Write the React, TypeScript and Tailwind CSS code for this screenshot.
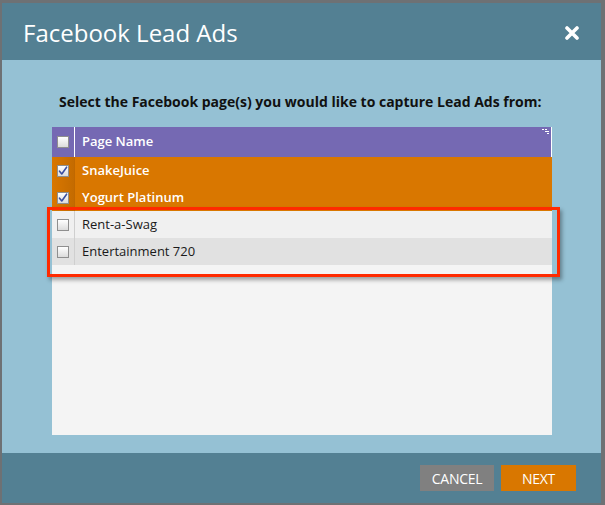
import React from "react";

function Checkbox({ checked }: { checked?: boolean }) {
  return (
    <div className="w-[12px] h-[12px] border border-[#8f8f8f] bg-gradient-to-b from-[#ffffff] to-[#dcdcdc] flex items-center justify-center">
      {checked && (
        <svg width="10" height="10" viewBox="0 0 10 10">
          <path d="M1.5 5.2 L3.8 8 L8.6 1.2" stroke="#3b4fa0" strokeWidth="1.6" fill="none" strokeLinecap="round" strokeLinejoin="round" />
        </svg>
      )}
    </div>
  );
}

type Row = { name: string; checked: boolean; kind: "sel" | "a" | "b" };

const rows: Row[] = [
  { name: "SnakeJuice", checked: true, kind: "sel" },
  { name: "Yogurt Platinum", checked: true, kind: "sel" },
  { name: "Rent-a-Swag", checked: false, kind: "a" },
  { name: "Entertainment 720", checked: false, kind: "b" },
];

export default function App() {
  return (
    <div
      className="w-[605px] h-[505px] bg-[#6e7174] overflow-hidden pt-[3px] pl-[2px]"
      style={{ fontFamily: '"Open Sans", "Noto Sans", sans-serif' }}
    >
      <div className="w-[599px] h-[500px] flex flex-col">
        {/* Header */}
        <div className="h-[57px] bg-[#538093] flex items-center justify-between pl-[21px] pr-[22px]">
          <span className="text-white text-[24px] leading-none mt-[2px]">Facebook Lead Ads</span>
          <svg width="14" height="14" viewBox="0 0 14 14" className="mt-[2px]">
            <path d="M2 2 L12 12 M12 2 L2 12" stroke="#ffffff" strokeWidth="3.6" strokeLinecap="round" />
          </svg>
        </div>
        {/* Body */}
        <div className="h-[393px] bg-[#95c1d4] flex flex-col pl-[50px]">
          <div className="mt-[34px] ml-[7px] h-[16px] text-[14px] leading-[16px] font-bold text-[#111]">
            Select the Facebook page(s) you would like to capture Lead Ads from:
          </div>
          <div className="relative mt-[17px] w-[500px] h-[308px] bg-[#f4f4f4] flex flex-col">
            <div className="h-[30px] bg-[#7569b3] flex items-stretch relative">
              <div className="w-[23px] flex items-center justify-center border-r border-white">
                <Checkbox />
              </div>
              <div className="flex items-center pl-[7px] text-white text-[13px] font-semibold">Page Name</div>
              <div className="absolute right-0 top-0 bottom-0 w-px bg-white" />
              <svg className="absolute right-[3px] top-[2px]" width="7" height="6" viewBox="0 0 7 6">
                <rect x="0" y="0" width="2" height="1" fill="#fff" />
                <rect x="3" y="0" width="2" height="1" fill="#fff" />
                <rect x="3" y="2" width="2" height="1" fill="#fff" />
                <rect x="5" y="2" width="2" height="1" fill="#fff" />
                <rect x="5" y="4" width="2" height="1" fill="#fff" />
              </svg>
            </div>
            {rows.map((r) => {
              const bg = r.kind === "sel" ? "bg-[#d97700]" : r.kind === "a" ? "bg-[#f0f0f0]" : "bg-[#e1e1e1]";
              const cellBg =
                r.kind === "sel"
                  ? "bg-gradient-to-r from-[#d97700] to-[#c46b00] border-r border-[#c06800]"
                  : "border-r border-[#cfcfcf]";
              const text =
                r.kind === "sel" ? "text-white font-semibold" : "text-[#1a1a1a]";
              return (
                <div key={r.name} className={`h-[27px] flex items-stretch ${bg}`}>
                  <div className={`w-[23px] flex items-center justify-center ${cellBg}`}>
                    <Checkbox checked={r.checked} />
                  </div>
                  <div className={`flex items-center pl-[7px] text-[13px] ${text}`}>{r.name}</div>
                </div>
              );
            })}
            <div className="absolute left-[-5px] top-[80px] w-[513px] h-[70px] border-[3px] border-[#ff2a00] shadow-[2px_3px_4px_rgba(0,0,0,0.35)]" />
          </div>
        </div>
        {/* Footer */}
        <div className="h-[50px] bg-[#538093] flex items-start justify-end pr-[25px] pt-[12px] gap-[7px]">
          <button className="w-[74px] h-[26px] bg-[#808080] text-white text-[14px] tracking-[-0.3px] flex items-center justify-center">
            CANCEL
          </button>
          <button className="w-[75px] h-[26px] bg-[#d97700] text-white text-[14px] tracking-[-0.3px] flex items-center justify-center">
            NEXT
          </button>
        </div>
      </div>
    </div>
  );
}
